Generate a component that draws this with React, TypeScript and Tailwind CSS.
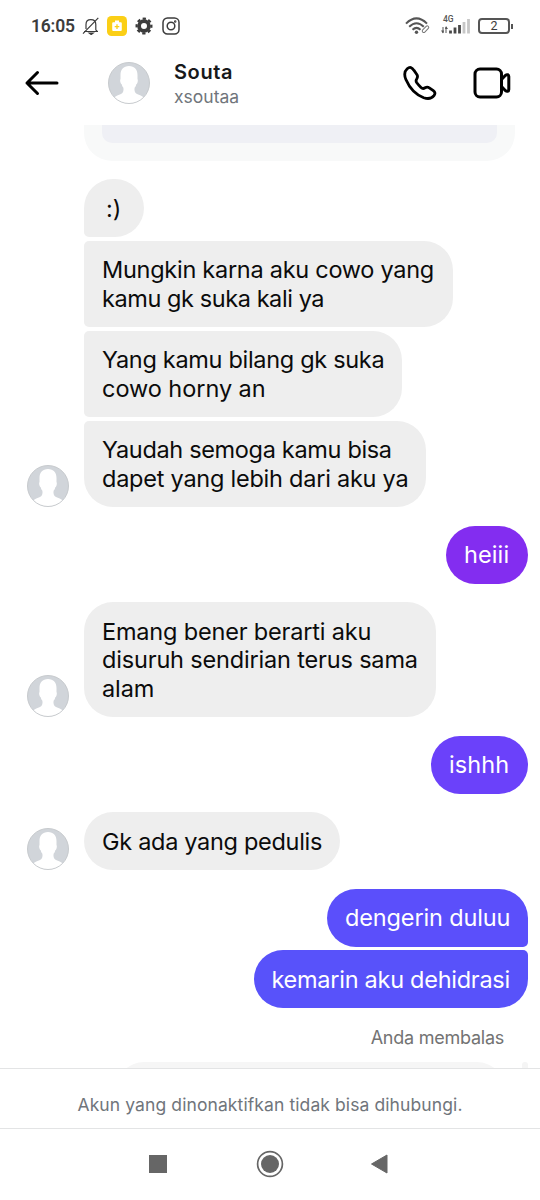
import React from "react";

type Line = { text: string; tracking?: string };

type Message = {
  id: number;
  lines: Line[];
  mine?: boolean;
  avatar?: boolean;
  // width, top margin, corners and colour of the bubble
  bubble: string;
  padding?: string;
};

const messages: Message[] = [
  {
    id: 1,
    lines: [{ text: ":)" }],
    bubble: "w-[60px] mt-[18.4px] rounded-[29px] rounded-bl-[5px] bg-[#eeeeee]",
    padding: "pl-[22px]",
  },
  {
    id: 2,
    lines: [
      { text: "Mungkin karna aku cowo yang", tracking: "tracking-[-0.27px]" },
      { text: "kamu gk suka kali ya", tracking: "tracking-[-0.42px]" },
    ],
    bubble: "w-[369px] mt-[3.5px] rounded-[29px] rounded-l-[5px] bg-[#eeeeee]",
  },
  {
    id: 3,
    lines: [
      { text: "Yang kamu bilang gk suka", tracking: "tracking-[-0.31px]" },
      { text: "cowo horny an", tracking: "tracking-[-0.05px]" },
    ],
    bubble: "w-[318px] mt-[3.5px] rounded-[29px] rounded-l-[5px] bg-[#eeeeee]",
  },
  {
    id: 4,
    lines: [
      { text: "Yaudah semoga kamu bisa", tracking: "tracking-[-0.33px]" },
      { text: "dapet yang lebih dari aku ya", tracking: "tracking-[-0.24px]" },
    ],
    avatar: true,
    bubble: "w-[342px] mt-[3.5px] rounded-[29px] rounded-tl-[5px] bg-[#eeeeee]",
  },
  {
    id: 5,
    lines: [{ text: "heiii", tracking: "tracking-[0.1px]" }],
    mine: true,
    bubble: "w-[82px] mt-[18.5px] rounded-[29px] bg-[#832df0]",
  },
  {
    id: 6,
    lines: [
      { text: "Emang bener berarti aku", tracking: "tracking-[-0.18px]" },
      { text: "disuruh sendirian terus sama", tracking: "tracking-[-0.17px]" },
      { text: "alam", tracking: "tracking-[-0.1px]" },
    ],
    avatar: true,
    bubble: "w-[352px] mt-[18.5px] rounded-[29px] bg-[#eeeeee]",
  },
  {
    id: 7,
    lines: [{ text: "ishhh", tracking: "tracking-[0.1px]" }],
    mine: true,
    bubble: "w-[97px] mt-[18.5px] rounded-[29px] bg-[#6b41fa]",
  },
  {
    id: 8,
    lines: [{ text: "Gk ada yang pedulis", tracking: "tracking-[-0.3px]" }],
    avatar: true,
    bubble: "w-[256px] mt-[18.5px] rounded-[29px] bg-[#eeeeee]",
  },
  {
    id: 9,
    lines: [{ text: "dengerin duluu", tracking: "tracking-[-0.14px]" }],
    mine: true,
    bubble: "w-[201px] mt-[18.5px] rounded-[29px] rounded-br-[5px] bg-[#5b4ffb]",
  },
  {
    id: 10,
    lines: [{ text: "kemarin aku dehidrasi", tracking: "tracking-[-0.27px]" }],
    mine: true,
    bubble: "w-[274.5px] mt-[3.5px] rounded-[29px] rounded-tr-[5px] bg-[#5852fa]",
  },
];

const Avatar = () => (
  <svg viewBox="0 0 42 42" className="w-[42px] h-[42px] shrink-0">
    <clipPath id="face">
      <circle cx="21" cy="21" r="20.5" />
    </clipPath>
    <circle cx="21" cy="21" r="20.5" fill="#d1d5da" />
    <path
      clipPath="url(#face)"
      fill="#fff"
      d="M21 4C15.500 4 12.500 7.500 12.500 13v4c-.5.800-.4 2.200 0 3.500.3 1 .7 1.500 1.200 1.700.3 1.500.8 2.500 1.700 3.500.4 3-.1 5-2.400 6.200-2.500 1.300-5 1.700-7 3.600L0 42h42l-6-6.500c-2-1.900-4.500-2.300-7-3.600-2.300-1.200-2.800-3.200-2.400-6.200.9-1 1.400-2 1.700-3.500.5-.2.9-.7 1.200-1.700.4-1.300.5-2.700 0-3.500v-4C29.500 7.500 26.500 4 21 4z"
    />
    <circle cx="21" cy="21" r="20.5" fill="none" stroke="#c3c6ca" strokeWidth="0.9" />
  </svg>
);

const StatusBar = () => (
  <div className="flex h-[52px] items-center pl-[31px] pr-[27px] text-[#3c3c3c]">
    <span className="w-[43px] font-[Roboto] text-[17.5px] font-semibold leading-5 tracking-[-0.2px] whitespace-nowrap">16:05</span>
    {/* Muted bell */}
    <svg viewBox="0 0 18 18" className="ml-2 h-[18px] w-[18px]" fill="none" stroke="currentColor" strokeWidth="1.2">
      <path d="M2 14.500h14M4 12V7.500C4 4.300 6 2.700 8.800 2.700c3 0 5 1.800 5 4.800v5.300l1.500 1.700M1 16.700 16.300.8" />
      <path d="M7.200 16h4l-2 1.500z" fill="currentColor" />
    </svg>
    {/* Battery saver */}
    <svg viewBox="0 0 20 20" className="ml-[7px] h-5 w-5">
      <rect width="20" height="20" rx="4.500" fill="#fbcf16" />
      <path fill="#fff" d="M8 4.500h4v1.700h1.800q1 0 1 1v6.600q0 1.200-1 1.200H6.200q-1 0-1-1.200V7.200q0-1 1-1H8z" />
      <path d="M7.700 10.600h4.600M10 8.300v4.600" stroke="#fbcf16" strokeWidth="1.3" />
    </svg>
    {/* Gear */}
    <svg viewBox="0 0 18 18" className="ml-2 h-[18px] w-[18px]">
      <circle cx="9" cy="9" r="4.9" fill="none" stroke="currentColor" strokeWidth="3.8" />
      <circle cx="9" cy="9" r="7.4" fill="none" stroke="currentColor" strokeWidth="2.2" strokeDasharray="3.3 2.512" strokeDashoffset="1.6" />
    </svg>
    {/* Camera */}
    <svg viewBox="0 0 18 18" className="ml-[9px] h-[18px] w-[18px]" fill="none" stroke="currentColor" strokeWidth="1.5">
      <rect x="1" y="1" width="16" height="16" rx="4.500" />
      <circle cx="9" cy="9" r="3.8" />
      <circle cx="13.2" cy="4.6" r=".5" />
    </svg>
    <div className="ml-auto flex items-center">
      {/* Wifi */}
      <svg viewBox="0 0 26 20" className="h-5 w-[26px]" fill="none" stroke="#555" strokeWidth="2">
        <path d="M1 7.600Q11.500-2.800 22 7.600M4.200 10.700q7.300-7 14.600 0M7.500 13.700q4-3.600 8 0" />
        <circle cx="11.5" cy="16.300" r="1.7" fill="#555" stroke="none" />
        <rect x="-4" y="-1.500" width="8" height="3" rx="1.500" transform="translate(20.500 13.200) rotate(-46)" strokeWidth="1" stroke="#777" fill="#fff" />
      </svg>
      {/* Mobile signal */}
      <div className="relative ml-[10px] h-5 w-[30px]">
        <span className="absolute -top-[2px] left-[2px] font-[Roboto] text-[8.5px] font-medium leading-[11px] text-[#555]">4G</span>
        <svg viewBox="0 0 30 20" className="h-5 w-[30px]">
          <path d="M2 11v6M5 11v6" stroke="#555" fill="none" />
          <path d="m0 14.500 2 3 1-3zM4 13l1-3 2 3z" fill="#555" />
          <path d="M9.500 17.500v-3M14 17.500v-6M18.500 17.500V9" stroke="#484848" strokeWidth="2.8" />
          <path d="M23 17.500V6M27.500 17.500V3" stroke="#c7c7c7" strokeWidth="2.8" />
        </svg>
      </div>
      {/* Battery */}
      <div className="ml-[7px] flex items-center">
        <div className="flex h-4 w-[32px] items-center justify-center rounded-[4px] border-2 border-[#555] font-[Roboto] text-[12.5px] leading-none">
          2
        </div>
        <div className="ml-px h-[5px] w-[2px] bg-[#555]" />
      </div>
    </div>
  </div>
);

const ChatHeader = () => (
  <div className="flex h-[73px] items-start pl-6 pr-[29px] text-black">
    <svg viewBox="0 0 36 28" className="mt-[17px] h-7 w-9" fill="none" stroke="currentColor" strokeWidth="3" strokeLinecap="round" strokeLinejoin="round">
      <path d="M33 14H3M13.500 3.500 3 14l10.500 10.500" />
    </svg>
    <div className="ml-12 mt-[10px]">
      <Avatar />
    </div>
    <div className="ml-6 mt-[7px] whitespace-nowrap">
      <div className="text-[20px] font-semibold leading-[26px] tracking-[0.6px] text-[#17191b]">Souta</div>
      <div className="text-[17.5px] leading-6 text-[#70757b]">xsoutaa</div>
    </div>
    <svg viewBox="0 0 34 34" className="ml-auto mt-[14px] h-[34px] w-[34px]" fill="none" stroke="currentColor" strokeWidth="2.8" strokeLinejoin="round">
      <path d="M4.200 2.800C1.200 5.500.9 8.700 2.900 13.500c3.800 8.800 9.800 15.200 17.800 18.200 4.600 1.600 7.900.9 10.300-2.100 1.500-1.900 1.200-3.400-.7-4.900l-4-2.900c-1.500-1-2.800-.9-4.200 0-1.700 1.100-2.600 1.100-4.100-.3-1.600-1.500-2.900-2.900-4.200-4.700-1.100-1.600-1.100-2.500 0-4.100.9-1.400 1-2.600.2-4L11 4.400C9 1.300 6.900.4 4.200 2.800z" />
    </svg>
    <svg viewBox="0 0 38 32" className="ml-[36.5px] mt-[15px] h-8 w-[38px]" fill="none" stroke="currentColor" strokeWidth="3" strokeLinejoin="round">
      <rect x="2" y="2" width="26.5" height="28" rx="5" />
      <path d="M28.500 12.500 32.500 8.300c1.400-1.200 3.300-.7 3.300 1.200v13c0 1.900-1.900 2.400-3.300 1.200l-4-4.200z" />
    </svg>
  </div>
);

const MessageRow = ({ message }: { message: Message }) => (
  <div className={`flex items-end ${message.mine ? "justify-end pr-3" : "pl-[27px]"}`}>
    {!message.mine && <div className="w-[57px] shrink-0">{message.avatar && <Avatar />}</div>}
    <div
      className={`shrink-0 whitespace-nowrap pt-[15.3px] pb-[14.2px] text-[23.5px] leading-[28.5px] ${
        message.mine ? "text-white" : "text-[#0b0b0b]"
      } ${message.padding ?? "pl-[18px]"} ${message.bubble}`}
    >
      {message.lines.map((line) => (
        <div key={line.text} className={line.tracking}>
          {line.text}
        </div>
      ))}
    </div>
  </div>
);

const App = () => {
  return (
    <div className="flex h-[1200px] w-[540px] flex-col overflow-hidden bg-white font-[Inter,sans-serif]">
      <StatusBar />
      <ChatHeader />
      <div className="h-[943px] shrink-0 overflow-hidden">
        {/* Tail of the shared post */}
        <div className="ml-[84px] h-9 w-[431px] rounded-b-[28px] bg-[#f8f9f9] px-[18px]">
          <div className="h-[18px] rounded-b-[10px] bg-[#eff0f5]" />
        </div>
        {messages.map((message) => (
          <MessageRow key={message.id} message={message} />
        ))}
        <div className="mr-9 mt-[18px] text-right text-[18px] leading-6 tracking-[-0.25px] text-[#737373]">Anda membalas</div>
        {/* Quoted reply, cut off by the footer */}
        <div className="mt-3 flex justify-end pr-3">
          <div className="h-14 w-[389px] rounded-[28px] bg-[#f6f6f6]" />
          <div className="ml-[17px] h-14 w-[6px] rounded-full bg-[#f5f5f5]" />
        </div>
      </div>
      <div className="flex h-[61px] shrink-0 items-center justify-center border-y border-[#e3e4e5] pt-[13px] text-[17.5px] tracking-[0.1px] text-[#70757b]">
        <span className="whitespace-nowrap">Akun yang dinonaktifkan tidak bisa dihubungi.</span>
      </div>
      {/* Android navigation */}
      <div className="flex flex-1 items-center pb-px pl-[149px] text-[#666]">
        <div className="h-[18px] w-[18px] bg-[#666]" />
        <svg viewBox="0 0 28 28" className="ml-[89px] h-7 w-7">
          <circle cx="14" cy="14" r="12.4" fill="none" stroke="currentColor" strokeWidth="1.7" />
          <circle cx="14" cy="14" r="9" fill="currentColor" />
        </svg>
        <svg viewBox="0 0 18 20" className="ml-[86px] h-5 w-[18px]">
          <path d="M17 1v18L1.500 10z" fill="currentColor" stroke="currentColor" strokeLinejoin="round" />
        </svg>
      </div>
    </div>
  );
};

export default App;
